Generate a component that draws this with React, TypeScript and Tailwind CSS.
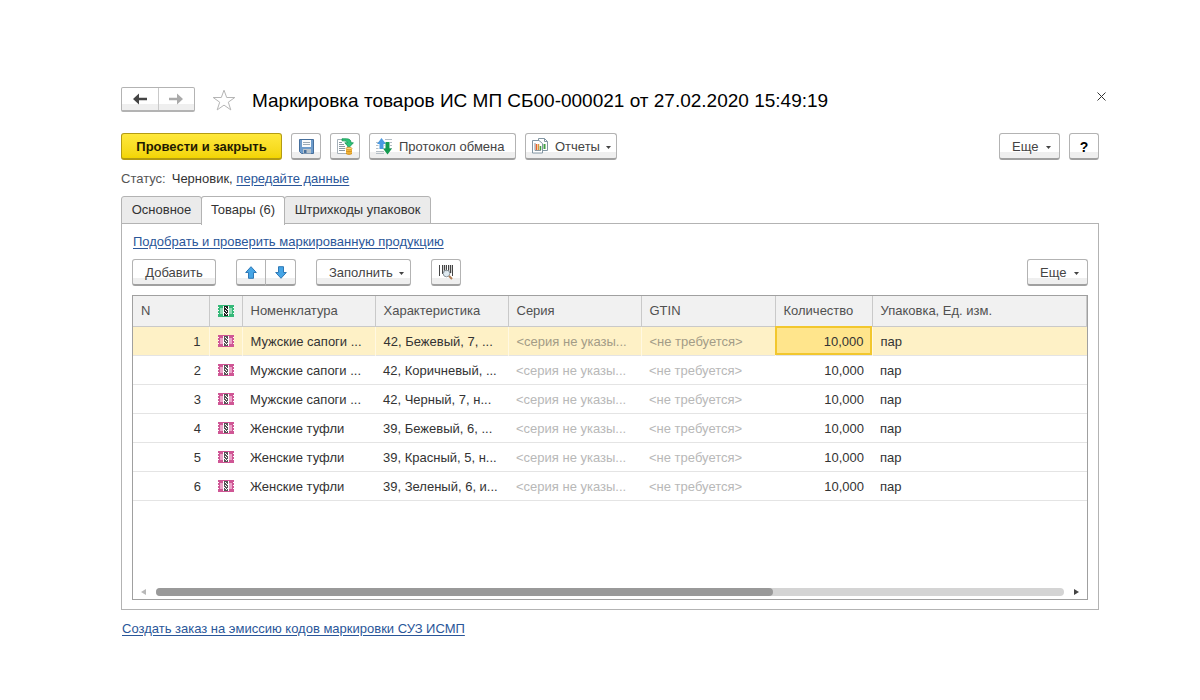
import { useState } from 'react';
import type { ReactNode } from 'react';
import clsx from 'clsx';

interface Product {
  id: number;
  name: string;
  characteristic: string;
  quantity: string;
  unit: string;
}

const products: Product[] = [
  { id: 1, name: 'Мужские сапоги ...', characteristic: '42, Бежевый, 7, ...', quantity: '10,000', unit: 'пар' },
  { id: 2, name: 'Мужские сапоги ...', characteristic: '42, Коричневый, ...', quantity: '10,000', unit: 'пар' },
  { id: 3, name: 'Мужские сапоги ...', characteristic: '42, Черный, 7, н...', quantity: '10,000', unit: 'пар' },
  { id: 4, name: 'Женские туфли', characteristic: '39, Бежевый, 6, ...', quantity: '10,000', unit: 'пар' },
  { id: 5, name: 'Женские туфли', characteristic: '39, Красный, 5, н...', quantity: '10,000', unit: 'пар' },
  { id: 6, name: 'Женские туфли', characteristic: '39, Зеленый, 6, и...', quantity: '10,000', unit: 'пар' },
];

const tabs = [
  { title: 'Основное', width: 'w-[81px]' },
  { title: 'Товары (6)', width: 'w-[84px]' },
  { title: 'Штрихкоды упаковок', width: 'w-[147px]' },
];

interface ToolButtonProps {
  children: ReactNode;
  className?: string;
  label?: string;
}

function ToolButton({ children, className, label }: ToolButtonProps) {
  return (
    <button
      type="button"
      aria-label={label}
      className={clsx(
        'flex h-[27px] shrink-0 items-center rounded-[3px] border border-[#b3b3b3] border-b-2 border-b-[#a0a0a0] bg-linear-to-b from-white from-75% to-[#efefef] to-75% pt-0.5 text-[#444444]',
        className,
      )}
    >
      {children}
    </button>
  );
}

function Caret() {
  return (
    <svg width="5" height="3" viewBox="0 0 5 3" aria-hidden="true">
      <path d="M0 0h5L2.5 3z" fill="#444" />
    </svg>
  );
}

function NavArrow({ color, flip }: { color: string; flip?: boolean }) {
  return (
    <svg width="14" height="12" viewBox="0 0 14 12" className={clsx(flip && 'rotate-180')} aria-hidden="true">
      <path d="M0 6 6 .5V4.700h8v2.600H6v4.200z" fill={color} />
    </svg>
  );
}

function MoveArrow({ down }: { down?: boolean }) {
  return (
    <svg width="12" height="13" viewBox="0 0 12 13" className={clsx('-mt-0.5', down && 'rotate-180')} aria-hidden="true">
      <path d="M6 .7 11.300 6.500H8.500v5.800h-5V6.500H.7z" fill="#45a5e6" stroke="#2f78b5" strokeLinejoin="round" />
    </svg>
  );
}

function StarIcon() {
  return (
    <svg width="24" height="22" viewBox="0 0 24 22" fill="none" aria-hidden="true">
      <path d="M12 1.200 14.700 8.500h8.100l-6.500 4.700 2.500 7.700-6.800-4.800-6.800 4.800 2.500-7.700L1.200 8.500h8.100z" stroke="#b5b5b5" />
    </svg>
  );
}

function SaveIcon() {
  return (
    <svg width="15" height="15" viewBox="0 0 15 15" className="-mt-0.5" aria-hidden="true">
      <path d="M.5.5h14v14H2.500l-2-2z" fill="#6c9bcb" stroke="#466f9c" />
      <path d="M3 1h9v7H3z" fill="#f7fafc" />
      <path d="M4 3.500h7M4 5.500h7" stroke="#9aa9b5" />
      <path d="M4 10h8v4.500H4z" fill="#b7c2ca" />
      <path d="M5 11h2.500v3H5z" fill="#466f9c" />
    </svg>
  );
}

function PostIcon() {
  return (
    <svg width="17" height="17" viewBox="0 0 17 17" className="-mt-0.5" aria-hidden="true">
      <path d="M.5 1.500h10v14H.5z" fill="#fff" stroke="#a6b1b9" />
      <path d="M2 4.500h3M2 6.500h5M2 8.500h6M2 10.500h6M2 12.500h6" stroke="#8b98a2" />
      <path d="M5 .8h4.500c3 0 4.500 1.400 4.500 4h2.400L12 9.500 7.800 4.800h2.500C10.300 3.300 9 3 5 2.800z" fill="#2fc47a" stroke="#149452" strokeWidth=".8" />
      <path d="M9 10.500h6v5.300c-1.500 1-4.500 1-6 0z" fill="#f3b83c" />
      <ellipse cx="12" cy="10.500" rx="3" ry="1.200" fill="#fbd984" stroke="#cf8b1c" strokeWidth=".7" />
      <path d="M9 13c1.500 1 4.500 1 6 0M9 15.500c1.500 1 4.500 1 6 0" stroke="#cf8b1c" fill="none" />
    </svg>
  );
}

function ExchangeIcon() {
  return (
    <svg width="17" height="17" viewBox="0 0 17 17" className="-mt-0.5" aria-hidden="true">
      <path d="M9 1.500h7M0 4.500h16M0 7.500h16M0 10.500h16M0 13.500h8M0 15.500h8" stroke="#b4bec6" />
      <path d="M2.500 6h6v6h-6zM9 3h5v7H9z" fill="#fff" />
      <path d="M5.500 0 10 6H7.500v5h-4V6H1z" fill="#4a9ae2" />
      <path d="M9.500 4h4v6.500H16L11.500 16.500 7 10.500h2.500z" fill="#149a50" />
    </svg>
  );
}

function ReportsIcon() {
  return (
    <svg width="17" height="16" viewBox="0 0 17 16" className="-mt-0.5" aria-hidden="true">
      <path d="M6.500.5h6l3 3v9h-9z" fill="#fff" stroke="#8296a3" />
      <path d="M12.500.5v3h3" fill="none" stroke="#8296a3" />
      <path d="M12.500 6v5" stroke="#43a047" strokeWidth="2" />
      <path d="M.5 2.500H7l3.500 3v9.500H.5z" fill="#fff" stroke="#8296a3" />
      <path d="M3 5v7.500h6" fill="none" stroke="#8b98a2" />
      <path d="M4.500 6v6" stroke="#e8602c" strokeWidth="1.500" />
      <path d="M6.500 6v6" stroke="#d89a3c" strokeWidth="1.500" />
      <path d="M8.500 8v4" stroke="#43a047" strokeWidth="1.500" />
    </svg>
  );
}

function BarcodeSearchIcon() {
  return (
    <svg width="16" height="16" viewBox="0 0 16 16" className="-mt-0.5" aria-hidden="true">
      <path d="M1.500 1v11M4.500 1v9M8.500 1v7M10.500 1v6M14.500 1v11" stroke="#454545" />
      <path d="M6.500 1v8M12.500 1v8" stroke="#454545" strokeWidth="1.500" />
      <circle cx="8.500" cy="9.500" r="3.300" fill="#dce8f0" fillOpacity=".9" stroke="#8b959c" />
      <path d="m11 12 3 3" stroke="#b07f58" strokeWidth="2" />
    </svg>
  );
}

function MarkIcon({ green }: { green?: boolean }) {
  const main = green ? '#35b878' : '#cf5695';
  const light = green ? '#8edcb4' : '#eba3c8';
  return (
    <svg width="16" height="12" viewBox="0 0 16 12" className="mx-auto" aria-hidden="true" shapeRendering="crispEdges">
      <path d="M0 0h16v12H0z" fill={main} />
      <path d="M2 3h3v6H2zM11 3h3v6h-3z" fill={light} />
      <path d="M0 2h1v1H0zM0 5h1v1H0zM0 8h1v1H0zM15 2h1v1h-1zM15 5h1v1h-1zM15 8h1v1h-1z" fill="#fff" />
      <path d="M5 1h6v10H5z" fill="#fff" />
      <path d="M6 1h4v10H6z" fill={green ? '#222' : '#555'} />
      <path d="M7 2h1v1H7zM8 3h1v1H8zM9 4h1v1H9zM7 5h1v1H7zM8 6h1v1H8zM6 7h1v1H6zM7 8h1v1H7zM9 8h1v1H9zM8 9h1v1H8z" fill="#fff" />
    </svg>
  );
}

function ScrollArrow({ color, left }: { color: string; left?: boolean }) {
  return (
    <svg width="5" height="6" viewBox="0 0 5 6" className={clsx(left && 'rotate-180')} aria-hidden="true">
      <path d="M0 0v6l5-3z" fill={color} />
    </svg>
  );
}

function ProductTable() {
  const [selected, setSelected] = useState(1);

  return (
    <table className="w-full table-fixed border-collapse text-left">
      <colgroup>
        <col className="w-[76px]" />
        <col className="w-[33px]" />
        <col className="w-[133px]" />
        <col className="w-[133px]" />
        <col className="w-[133px]" />
        <col className="w-[134px]" />
        <col className="w-[97px]" />
        <col />
      </colgroup>
      <thead>
        <tr className="h-[30px] border-b border-[#c9c9c9] bg-[#f1f1f1] text-[#505050] *:border-r *:border-[#c9c9c9] *:px-2 *:py-0 *:font-normal">
          <th>N</th>
          <th aria-label="Маркировка" className="px-0!">
            <MarkIcon green />
          </th>
          <th>Номенклатура</th>
          <th>Характеристика</th>
          <th>Серия</th>
          <th>GTIN</th>
          <th>Количество</th>
          <th>Упаковка, Ед. изм.</th>
        </tr>
      </thead>
      <tbody>
        {products.map((product) => {
          const active = product.id === selected;
          return (
            <tr
              key={product.id}
              onClick={() => setSelected(product.id)}
              className={clsx(
                'h-[29px] border-b border-[#e4e4e4] whitespace-nowrap *:px-2 *:pt-0.5 *:pb-0',
                active && 'bg-[#fef1c6] *:not-last:border-r *:border-[#fff8e2]',
              )}
            >
              <td className="text-right">{product.id}</td>
              <td className="px-0! pt-0!">
                <MarkIcon />
              </td>
              <td>{product.name}</td>
              <td>{product.characteristic}</td>
              <td className={active ? 'text-[#a39c87]' : 'text-[#b8b8b8]'}>&lt;серия не указы...</td>
              <td className={active ? 'text-[#a39c87]' : 'text-[#b8b8b8]'}>&lt;не требуется&gt;</td>
              <td
                className={clsx(
                  'text-right',
                  active && 'bg-[#ffe58c] outline-2 -outline-offset-2 outline-[#f2c72e]',
                )}
              >
                {product.quantity}
              </td>
              <td>{product.unit}</td>
            </tr>
          );
        })}
      </tbody>
    </table>
  );
}

export default function App() {
  const [tab, setTab] = useState(1);

  return (
    <main className="min-h-screen bg-white pt-[87px] pr-[101px] pb-8 pl-[121px] font-['Liberation_Sans',Arial,sans-serif] text-[13px] leading-4 text-[#333333]">
      <header className="flex h-[25px] items-center">
        <div className="flex h-[25px] w-[74px] shrink-0 rounded-[2px] border border-[#b3b3b3] border-b-2 bg-linear-to-b from-white from-75% to-[#efefef] to-75%">
          <button type="button" aria-label="Назад" className="flex flex-1 items-center justify-center border-r border-[#c9c9c9]">
            <NavArrow color="#444" />
          </button>
          <button type="button" aria-label="Вперед" className="flex flex-1 items-center justify-center">
            <NavArrow color="#aaa" flip />
          </button>
        </div>
        <button type="button" aria-label="В избранное" className="ml-[17px]">
          <StarIcon />
        </button>
        <h1 className="ml-4 pt-0.5 text-[19px] leading-6 text-black">
          Маркировка товаров ИС МП СБ00-000021 от 27.02.2020 15:49:19
        </h1>
        <button type="button" aria-label="Закрыть" className="mr-[-7px] mb-1.5 ml-auto">
          <svg width="9" height="9" viewBox="0 0 9 9" aria-hidden="true">
            <path d="m.5.5 8 8m0-8-8 8" stroke="#333" />
          </svg>
        </button>
      </header>

      <div className="mt-[21px] flex gap-[9px]">
        <button
          type="button"
          className="h-[27px] w-[161px] rounded-[3px] border border-[#b39b13] border-b-2 bg-linear-to-b from-[#ffe83a] to-[#f3d500] pt-0.5 font-bold text-[#1f1a00]"
        >
          Провести и закрыть
        </button>
        <ToolButton className="w-[30px] justify-center" label="Записать">
          <SaveIcon />
        </ToolButton>
        <ToolButton className="w-[30px] justify-center" label="Провести">
          <PostIcon />
        </ToolButton>
        <ToolButton className="w-[147px] gap-1.5 pl-1.5">
          <ExchangeIcon />
          Протокол обмена
        </ToolButton>
        <ToolButton className="w-[92px] gap-1.5 pl-1.5">
          <ReportsIcon />
          Отчеты
          <Caret />
        </ToolButton>
        <ToolButton className="ml-auto w-[61px] gap-2 pl-3">
          Еще
          <Caret />
        </ToolButton>
        <ToolButton className="w-[30px] justify-center text-sm font-bold text-black" label="Справка">
          ?
        </ToolButton>
      </div>

      <p className="mt-[11px]">
        <span className="mr-1.5 text-[#555555]">Статус:</span>
        Черновик,{' '}
        <a href="#send" className="text-[#2a5699] underline underline-offset-2">
          передайте данные
        </a>
      </p>

      <div role="tablist" className="mt-[9px] flex">
        {tabs.map(({ title, width }, index) => (
          <button
            key={title}
            type="button"
            role="tab"
            aria-selected={tab === index}
            onClick={() => setTab(index)}
            className={clsx(
              'rounded-t-[3px] border border-[#b3b3b3] whitespace-nowrap',
              width,
              index > 0 && '-ml-px',
              tab === index ? 'z-10 -mb-px h-[29px] border-b-0 bg-white pb-0.5' : 'h-7 bg-[#ebebeb]',
            )}
          >
            {title}
          </button>
        ))}
      </div>

      <section className="-mt-px border border-[#b3b3b3] px-2.5 pt-2.5 pb-[9px]">
        <a href="#check" className="ml-px block w-fit text-[#2a5699] underline underline-offset-2">
          Подобрать и проверить маркированную продукцию
        </a>

        <div className="mt-[9px] flex">
          <ToolButton className="w-[84px] justify-center">Добавить</ToolButton>
          <ToolButton className="ml-5 w-[30px] justify-center rounded-r-none" label="Переместить вверх">
            <MoveArrow />
          </ToolButton>
          <ToolButton className="-ml-px w-[31px] justify-center rounded-l-none" label="Переместить вниз">
            <MoveArrow down />
          </ToolButton>
          <ToolButton className="ml-5 w-[95px] gap-1.5 pl-3">
            Заполнить
            <Caret />
          </ToolButton>
          <ToolButton className="ml-5 w-[30px] justify-center" label="Поиск по штрихкоду">
            <BarcodeSearchIcon />
          </ToolButton>
          <ToolButton className="ml-auto w-[61px] gap-2 pl-3">
            Еще
            <Caret />
          </ToolButton>
        </div>

        <div className="mt-[9px] flex min-h-[305px] flex-col border border-[#a0a0a0]">
          <ProductTable />
          <div className="mt-auto flex h-3.5 items-center gap-2.5 px-2">
            <ScrollArrow color="#b8b8b8" left />
            <div className="h-2 flex-1 rounded-full bg-[#d4d4d4]">
              <div className="h-2 w-[68%] rounded-full bg-[#999999]" />
            </div>
            <ScrollArrow color="#444" />
          </div>
        </div>
      </section>

      <a href="#order" className="mt-[11px] ml-px block w-fit text-[#2a5699] underline underline-offset-2">
        Создать заказ на эмиссию кодов маркировки СУЗ ИСМП
      </a>
    </main>
  );
}
